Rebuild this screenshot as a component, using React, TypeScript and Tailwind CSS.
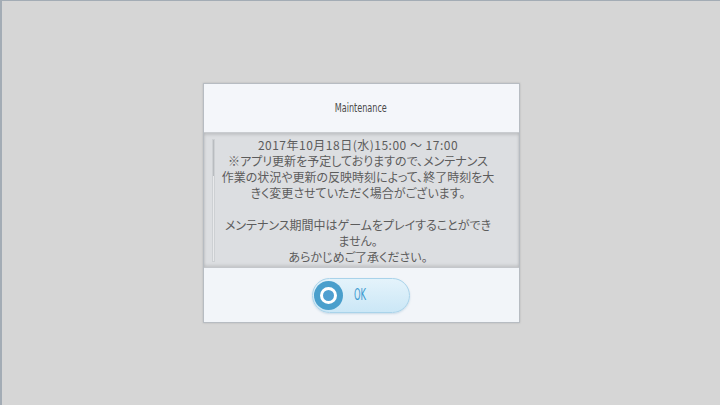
import React from 'react';

const LINES = [
  '※アプリ更新を予定しておりますので、メンテナンス',
  '作業の状況や更新の反映時刻によって、終了時刻を大',
  'きく変更させていただく場合がございます。',
  '',
  'メンテナンス期間中はゲームをプレイすることができ',
  'ません。',
  'あらかじめご了承ください。',
];

function OkButton() {
  return (
    <button className="w-[98px] h-[35px] rounded-full border border-[#a9d3ea] bg-gradient-to-b from-[#e4f3fb] to-[#cbe7f6] shadow-[0_1px_2px_rgba(80,140,180,0.25)] flex items-center pl-[1px]">
      <span className="w-[29px] h-[29px] rounded-full bg-[#4a9fcc] flex items-center justify-center">
        <span className="w-[17px] h-[17px] rounded-full border-[3px] border-white bg-[#4f9fd0]" />
      </span>
      <span
        className="ml-[11px] text-[15px] text-[#3b9ad0] inline-block scale-x-[0.62] origin-left leading-none"
        style={{ fontFamily: '"DejaVu Sans Condensed", "DejaVu Sans", sans-serif' }}
      >
        OK
      </span>
    </button>
  );
}

export default function App() {
  return (
    <div className="w-[720px] h-[405px] bg-[#d6d6d6] border-t border-l-2 border-[#a3acb5] flex items-center justify-center">
      <div className="w-[317px] h-[240px] flex flex-col border border-[#b7bcc2] shadow-[0_0_2px_rgba(0,0,0,0.15)] bg-[#f2f5f9]">
        <div className="h-[49px] bg-[#f4f6fa] flex items-center justify-center border-b border-[#c9ccd0]">
          <span
            className="text-[12px] text-[#4a4a4a] inline-block scale-x-[0.75] leading-none"
            style={{ fontFamily: '"DejaVu Sans Condensed", "DejaVu Sans", sans-serif' }}
          >
            Maintenance
          </span>
        </div>
        <div className="h-[134px] bg-[#dcdee1] shadow-[inset_0_2px_3px_rgba(0,0,0,0.12),inset_0_-2px_3px_rgba(0,0,0,0.1)] flex overflow-hidden pl-[8px] pr-[17px] pt-[4px]">
          <div className="w-[3px] mt-[2px] h-[123px] bg-[#e8e9eb] border border-[#cdd0d3] flex flex-col">
            <div className="h-[36px] bg-[#b9bcc0]" />
          </div>
          <div
            className="flex-1 text-center text-[12px] leading-[16px] text-[#5c5c5c] whitespace-nowrap"
            style={{ fontFamily: '"Noto Sans CJK JP", "Noto Sans", sans-serif', fontFeatureSettings: '"palt"' }}
          >
            <div className="h-[16px] tracking-[0.5px]">2017年10月18日(水)15:00 ～ 17:00</div>
            {LINES.map((l, i) => (
              <div key={i} className="h-[16px]">{l}</div>
            ))}
          </div>
        </div>
        <div className="flex-1 flex items-center justify-center border-t border-[#c4c7cb]">
          <OkButton />
        </div>
      </div>
    </div>
  );
}
